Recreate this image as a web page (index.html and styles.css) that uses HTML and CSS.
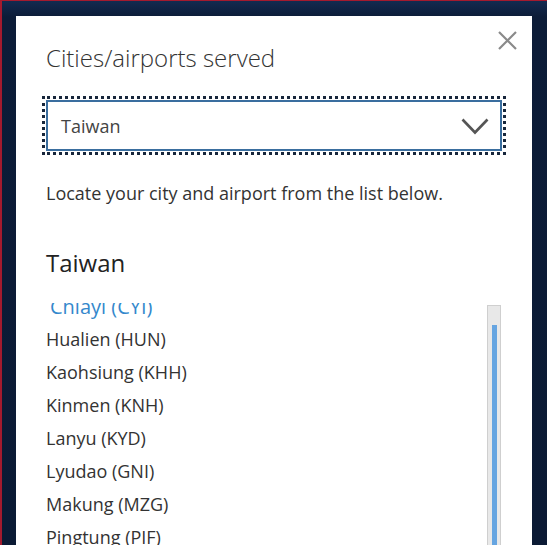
FILE: index.html
```html
<!DOCTYPE html>
<html lang="en">
<head>
<meta charset="utf-8">
<title>Cities/airports served</title>
<link rel="stylesheet" href="styles.css">
</head>
<body>
<div class="backdrop">
  <div class="modal">
    <button class="close" aria-label="Close">
      <svg width="19" height="19" viewBox="0 0 19 19"><path d="M1 1 L18 18 M18 1 L1 18" stroke="#8a8a8a" stroke-width="2.2" fill="none"/></svg>
    </button>
    <h2 class="title">Cities/airports served</h2>
    <div class="select">
      <span class="select-value">Taiwan</span>
      <svg class="chevron" width="28" height="17" viewBox="0 0 28 17"><path d="M1.5 1.5 L14 14.5 L26.5 1.5" stroke="#555" stroke-width="2.6" fill="none"/></svg>
    </div>
    <p class="intro">Locate your city and airport from the list below.</p>
    <h3 class="country">Taiwan</h3>
    <div class="list-area">
      <ul class="list">
        <li class="link">Chiayi (CYI)</li>
        <li>Hualien (HUN)</li>
        <li>Kaohsiung (KHH)</li>
        <li>Kinmen (KNH)</li>
        <li>Lanyu (KYD)</li>
        <li>Lyudao (GNI)</li>
        <li>Makung (MZG)</li>
        <li>Pingtung (PIF)</li>
        <li>Taichung (RMQ)</li>
      </ul>
      <div class="scrollbar"><div class="thumb"></div></div>
    </div>
  </div>
</div>
</body>
</html>
```

FILE: styles.css
```css
* { box-sizing: border-box; }
html, body {
  margin: 0;
  padding: 0;
  height: 545px;
  overflow: hidden;
  background: #0b1a34;
}
.backdrop {
  height: 545px;
  border-top: 1px solid #a41a2e;
  border-left: 2px solid #a41a2e;
  padding: 15px 0 0 14px;
  background: linear-gradient(#132a50 0, #0c1c38 16px, #0b1a34 100%);
}
.modal {
  position: relative;
  width: 516px;
  height: 560px;
  background: #fff;
  padding: 26px 30px 0 30px;
  font-family: "Open Sans", "Liberation Sans", sans-serif;
  color: #333;
}
.close {
  position: absolute;
  top: 15px;
  right: 15px;
  width: 19px;
  height: 19px;
  padding: 0;
  border: 0;
  background: none;
  display: flex;
}
.title {
  margin: 0;
  font-size: 24px;
  font-weight: 300;
  line-height: 32px;
  color: #333;
}
.select {
  margin-top: 26px;
  height: 51px;
  border: 2px solid #3a6e9f;
  outline: 3px dotted #17263b;
  outline-offset: 1px;
  display: flex;
  align-items: center;
  justify-content: space-between;
  padding: 0 11px 0 13px;
}
.select-value {
  font-size: 18px;
  color: #444;
}
.chevron { margin-top: 2px; }
.intro {
  margin: 30px 0 0;
  font-size: 18px;
  line-height: 24px;
  color: #333;
}
.country {
  margin: 42px 0 0;
  font-size: 24px;
  font-weight: 400;
  line-height: 32px;
  color: #222;
}
.list-area {
  margin-top: 24px;
  height: 260px;
  display: flex;
  overflow: hidden;
}
.list {
  flex: 1;
  list-style: none;
  margin: -13px 0 0;
  padding: 0;
}
.list li {
  font-size: 18px;
  line-height: 33px;
  color: #333;
}
.list li.link {
  color: #3488cc;
  font-size: 20px;
  padding-left: 4px;
}
.scrollbar {
  width: 14px;
  margin: 2px 1px 0 0;
  border: 1px solid #cfcfcf;
  background: #e8e8e8;
  padding: 19px 3px 0 4px;
}
.thumb {
  height: 100%;
  background: #66a5e1;
}
```
